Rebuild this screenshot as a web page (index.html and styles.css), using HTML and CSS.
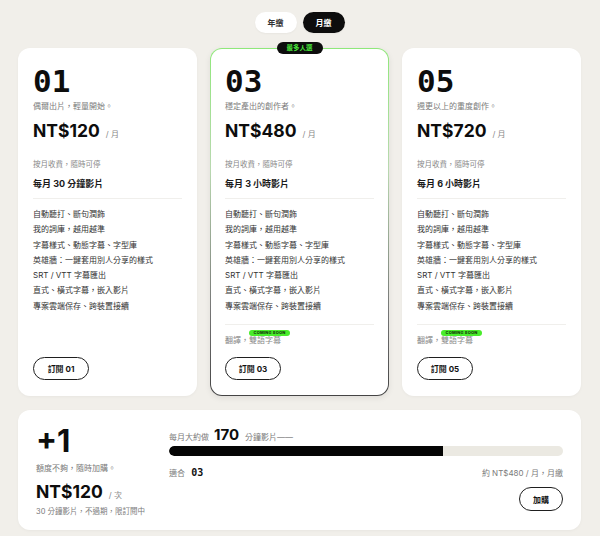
FILE: index.html
```html
<!DOCTYPE html>
<html lang="zh-Hant">
<head>
<meta charset="utf-8">
<link rel="stylesheet" href="styles.css">
</head>
<body>
<div class="page">
  <div class="toggle">
    <button class="pill">年繳</button>
    <button class="pill active">月繳</button>
  </div>

  <div class="plans">
    <div class="card">
      <div class="num">01</div>
      <div class="desc">偶爾出片，輕量開始。</div>
      <div class="price"><span class="amount">NT$120</span><span class="per">/ 月</span></div>
      <div class="billing">按月收費，隨時可停</div>
      <div class="quota">每月 30 分鐘影片</div>
      <div class="rule"></div>
      <ul class="features">
        <li>自動聽打、斷句潤飾</li>
        <li>我的詞庫，越用越準</li>
        <li>字幕樣式、動態字幕、字型庫</li>
        <li>英雄牆：一鍵套用別人分享的樣式</li>
        <li>SRT / VTT 字幕匯出</li>
        <li>直式、橫式字幕，嵌入影片</li>
        <li>專案雲端保存、跨裝置接續</li>
      </ul>
      <button class="btn">訂閱 01</button>
    </div>

    <div class="card featured">
      <span class="tag">最多人選</span>
      <div class="num">03</div>
      <div class="desc">穩定產出的創作者。</div>
      <div class="price"><span class="amount">NT$480</span><span class="per">/ 月</span></div>
      <div class="billing">按月收費，隨時可停</div>
      <div class="quota">每月 3 小時影片</div>
      <div class="rule"></div>
      <ul class="features">
        <li>自動聽打、斷句潤飾</li>
        <li>我的詞庫，越用越準</li>
        <li>字幕樣式、動態字幕、字型庫</li>
        <li>英雄牆：一鍵套用別人分享的樣式</li>
        <li>SRT / VTT 字幕匯出</li>
        <li>直式、橫式字幕，嵌入影片</li>
        <li>專案雲端保存、跨裝置接續</li>
      </ul>
      <div class="rule rule-extra"></div>
      <div class="extra">翻譯，<span class="soon-wrap">雙語字幕<span class="soon">COMING SOON</span></span></div>
      <button class="btn">訂閱 03</button>
    </div>

    <div class="card">
      <div class="num">05</div>
      <div class="desc">週更以上的重度創作。</div>
      <div class="price"><span class="amount">NT$720</span><span class="per">/ 月</span></div>
      <div class="billing">按月收費，隨時可停</div>
      <div class="quota">每月 6 小時影片</div>
      <div class="rule"></div>
      <ul class="features">
        <li>自動聽打、斷句潤飾</li>
        <li>我的詞庫，越用越準</li>
        <li>字幕樣式、動態字幕、字型庫</li>
        <li>英雄牆：一鍵套用別人分享的樣式</li>
        <li>SRT / VTT 字幕匯出</li>
        <li>直式、橫式字幕，嵌入影片</li>
        <li>專案雲端保存、跨裝置接續</li>
      </ul>
      <div class="rule rule-extra"></div>
      <div class="extra">翻譯，<span class="soon-wrap">雙語字幕<span class="soon">COMING SOON</span></span></div>
      <button class="btn">訂閱 05</button>
    </div>
  </div>

  <div class="addon">
    <div class="addon-left">
      <div class="plus">+1</div>
      <div class="desc">額度不夠，隨時加購。</div>
      <div class="price"><span class="amount">NT$120</span><span class="per">/ 次</span></div>
      <div class="fine">30 分鐘影片，不過期，限訂閱中</div>
    </div>
    <div class="addon-right">
      <div class="usage">每月大約做 <span class="mins">170</span> 分鐘影片——</div>
      <div class="track"><div class="fill" style="width:69.5%"></div></div>
      <div class="suggest">
        <div class="fit">適合 <span class="fit-num">03</span></div>
        <div class="est">約 NT$480 / 月，月繳</div>
      </div>
      <div class="buy-row"><button class="btn">加購</button></div>
    </div>
  </div>
</div>
</body>
</html>
```

FILE: styles.css
```css
* { box-sizing: border-box; }

html, body {
  margin: 0;
  padding: 0;
}

body {
  background: #f1efea;
  font-family: Inter, "Noto Sans CJK TC", sans-serif;
  color: #1a1a1a;
  width: 600px;
  height: 536px;
  overflow: hidden;
}

.page {
  padding: 12px 19px 0 18px;
}

.toggle {
  display: flex;
  justify-content: center;
  gap: 6px;
}

.pill {
  width: 42px;
  height: 21px;
  border: none;
  border-radius: 11px;
  background: #fff;
  color: #333;
  font-family: inherit;
  font-size: 8px;
  font-weight: 700;
  padding: 0;
  box-shadow: 0 1px 2px rgba(0,0,0,0.04);
}

.pill.active {
  background: #0d0d0d;
  color: #fff;
}

.plans {
  margin-top: 15px;
  display: grid;
  grid-template-columns: repeat(3, 1fr);
  gap: 13px;
}

.card {
  position: relative;
  height: 348px;
  background: #fff;
  border-radius: 12px;
  padding: 16px 15px 16px;
  display: flex;
  flex-direction: column;
  align-items: flex-start;
  box-shadow: 0 1px 3px rgba(0,0,0,0.04);
}

.card.featured {
  border: 1px solid transparent;
  padding: 15px 14px 15px;
  background:
    linear-gradient(#fff, #fff) padding-box,
    linear-gradient(180deg, #8fe87a 0%, #b9d8b0 35%, #777 75%, #444 100%) border-box;
  box-shadow: 0 2px 6px rgba(0,0,0,0.08);
}

.tag {
  position: absolute;
  top: -7px;
  left: 50%;
  transform: translateX(-50%);
  width: 46px;
  height: 12px;
  border-radius: 6px;
  background: #0d0d0d;
  color: #4ae83a;
  font-size: 6.5px;
  font-weight: 700;
  line-height: 12px;
  text-align: center;
}

.num {
  font-family: "DejaVu Sans Mono", monospace;
  font-weight: 700;
  font-size: 31px;
  line-height: 30px;
  margin-top: 2px;
  color: #0d0d0d;
}

.desc {
  font-size: 8px;
  line-height: 12px;
  color: #7a7a7a;
  margin-top: 4px;
}

.price {
  margin-top: 8px;
  line-height: 22px;
  display: flex;
  align-items: baseline;
}

.amount {
  font-size: 17.5px;
  font-weight: 700;
  color: #0d0d0d;
}

.per {
  font-size: 8px;
  color: #888;
  margin-left: 6px;
}

.billing {
  font-size: 7.5px;
  line-height: 12px;
  color: #888;
  margin-top: 14px;
}

.quota {
  font-size: 9px;
  font-weight: 700;
  line-height: 14px;
  color: #1a1a1a;
  margin-top: 6px;
}

.rule {
  align-self: stretch;
  height: 1px;
  background: #f0efec;
  margin-top: 7px;
}

.features {
  list-style: none;
  margin: 8px 0 0;
  padding: 0;
  font-size: 8px;
  line-height: 15.3px;
  color: #333;
}

.rule-extra {
  margin-top: 10px;
}

.extra {
  margin-top: 9px;
  font-size: 8px;
  line-height: 12px;
  color: #8a8a8a;
}

.soon-wrap {
  position: relative;
}

.soon {
  position: absolute;
  left: 0;
  top: -5px;
  width: 41px;
  height: 6px;
  border-radius: 3px;
  background: #49ec2b;
  color: #153d0c;
  font-size: 4px;
  font-weight: 800;
  line-height: 6px;
  text-align: center;
  letter-spacing: 0.2px;
}

.btn {
  margin-top: auto;
  width: 56px;
  height: 23px;
  padding: 0;
  border: 1px solid #1f1f1f;
  border-radius: 12px;
  background: #fff;
  color: #111;
  font-family: inherit;
  font-size: 8px;
  font-weight: 700;
}

.addon {
  margin-top: 14px;
  height: 120px;
  background: #fff;
  border-radius: 12px;
  padding: 16px 18px 0;
  display: grid;
  grid-template-columns: 133px 1fr;
  gap: 0;
  box-shadow: 0 1px 3px rgba(0,0,0,0.04);
}

.addon .desc {
  margin-top: 6px;
}

.addon .price {
  margin-top: 7px;
}

.plus {
  font-size: 31px;
  font-weight: 700;
  line-height: 30px;
  color: #0d0d0d;
}

.fine {
  font-size: 7.5px;
  line-height: 11px;
  color: #7a7a7a;
}

.addon-right {
  display: flex;
  flex-direction: column;
}

.usage {
  margin-top: 0;
  font-size: 8px;
  line-height: 18px;
  color: #7a7a7a;
  display: flex;
  align-items: baseline;
}

.mins {
  font-size: 15px;
  font-weight: 700;
  color: #0d0d0d;
  margin: 0 6px 0 5px;
}

.track {
  height: 10px;
  border-radius: 5px;
  background: #ebe9e2;
  overflow: hidden;
}

.fill {
  height: 100%;
  background: #050505;
  border-radius: 5px 0 0 5px;
}

.suggest {
  margin-top: 11px;
  display: flex;
  justify-content: space-between;
  align-items: baseline;
  font-size: 8px;
  line-height: 12px;
  color: #7a7a7a;
}

.fit-num {
  font-family: "DejaVu Sans Mono", monospace;
  font-weight: 700;
  font-size: 10px;
  color: #111;
  margin-left: 4px;
}

.buy-row {
  margin-top: 8px;
  display: flex;
  justify-content: flex-end;
}

.buy-row .btn {
  width: 44px;
  height: 24px;
  margin-top: 0;
  font-size: 8px;
}
```
